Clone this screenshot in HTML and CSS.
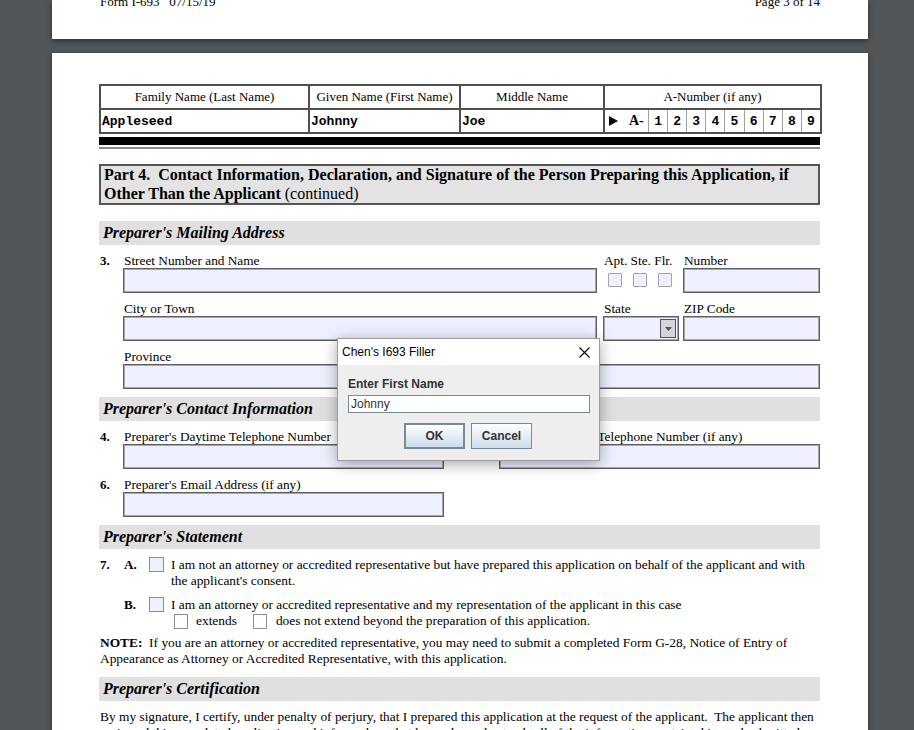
FILE: index.html
```html
<!DOCTYPE html>
<html>
<head>
<meta charset="utf-8">
<title>I-693 Filler</title>
<link rel="stylesheet" href="styles.css">
</head>
<body>
<div class="page page-prev">
  <div class="running-foot"><span>Form I-693&nbsp;&nbsp;&nbsp;07/15/19</span><span>Page 3 of 14</span></div>
</div>

<div class="page page-cur">
  <table class="names">
    <colgroup><col class="c1"><col class="c2"><col class="c3"><col class="c4"></colgroup>
    <tr class="hdr">
      <td>Family Name (Last Name)</td>
      <td>Given Name (First Name)</td>
      <td>Middle Name</td>
      <td>A-Number (if any)</td>
    </tr>
    <tr class="vals">
      <td>Appleseed</td>
      <td>Johnny</td>
      <td>Joe</td>
      <td class="anum">
        <div class="anum-row">
          <span class="anum-pre"><svg class="tri" width="9" height="10" viewBox="0 0 9 10"><polygon points="0,0 9,5 0,10" fill="#000"/></svg><b>A-</b></span>
          <span class="digit">1</span><span class="digit">2</span><span class="digit">3</span><span class="digit">4</span><span class="digit">5</span><span class="digit">6</span><span class="digit">7</span><span class="digit">8</span><span class="digit">9</span>
        </div>
      </td>
    </tr>
  </table>
  <div class="rule-black"></div>
  <div class="rule-gray"></div>

  <div class="part-box">Part 4.&nbsp; Contact Information, Declaration, and Signature of the Person Preparing this Application, if Other Than the Applicant <span class="cont">(continued)</span></div>

  <div class="sec-bar sec-first">Preparer's Mailing Address</div>

  <div class="row row-addr">
    <div class="num">3.</div>
    <div class="field">
      <div class="lbl">Street Number and Name</div>
      <div class="inp w-street"></div>
    </div>
    <div class="field">
      <div class="lbl">Apt. Ste. Flr.</div>
      <div class="apt-boxes"><span class="apt-cb"></span><span class="apt-cb"></span><span class="apt-cb"></span></div>
    </div>
    <div class="field">
      <div class="lbl">Number</div>
      <div class="inp w-num"></div>
    </div>
  </div>

  <div class="row row-addr">
    <div class="num"></div>
    <div class="field">
      <div class="lbl">City or Town</div>
      <div class="inp w-street"></div>
    </div>
    <div class="field">
      <div class="lbl">State</div>
      <div class="inp sel"><span class="sel-btn"><svg width="7" height="4" viewBox="0 0 7 4"><polygon points="0,0 7,0 3.5,4" fill="#555"/></svg></span></div>
    </div>
    <div class="field">
      <div class="lbl">ZIP Code</div>
      <div class="inp w-num"></div>
    </div>
  </div>

  <div class="row row-prov">
    <div class="num"></div>
    <div class="field">
      <div class="lbl">Province</div>
      <div class="inp w-prov"></div>
    </div>
  </div>

  <div class="sec-bar">Preparer's Contact Information</div>

  <div class="row row-contact">
    <div class="num">4.</div>
    <div class="field">
      <div class="lbl">Preparer's Daytime Telephone Number</div>
      <div class="inp w-half"></div>
    </div>
    <div class="num">5.</div>
    <div class="field">
      <div class="lbl">Preparer's Mobile Telephone Number (if any)</div>
      <div class="inp w-half"></div>
    </div>
  </div>

  <div class="row row-contact">
    <div class="num">6.</div>
    <div class="field">
      <div class="lbl">Preparer's Email Address (if any)</div>
      <div class="inp w-half"></div>
    </div>
  </div>

  <div class="sec-bar">Preparer's Statement</div>

  <div class="stmt stmt-a">
    <div class="num">7.</div>
    <div class="num">A.</div>
    <div><span class="cb"></span></div>
    <div class="stmt-text">I am not an attorney or accredited representative but have prepared this application on behalf of the applicant and with the applicant's consent.</div>
  </div>

  <div class="stmt stmt-b">
    <div class="num"></div>
    <div class="num">B.</div>
    <div><span class="cb"></span></div>
    <div class="stmt-text">
      <div>I am an attorney or accredited representative and my representation of the applicant in this case</div>
      <div class="sub"><span class="cb cb-sub"></span><span>extends</span><span class="cb cb-sub cb-sub2"></span><span>does not extend beyond the preparation of this application.</span></div>
    </div>
  </div>

  <p class="note"><b>NOTE:</b>&nbsp; If you are an attorney or accredited representative, you may need to submit a completed Form G-28, Notice of Entry of Appearance as Attorney or Accredited Representative, with this application.</p>

  <div class="sec-bar sec-cert">Preparer's Certification</div>

  <p class="cert">By my signature, I certify, under penalty of perjury, that I prepared this application at the request of the applicant.&nbsp; The applicant then reviewed this completed application and informed me that he or she understands all of the information contained in, and submitted with, his or her application.</p>
</div>

<div class="dialog">
  <div class="dlg-title">
    <span>Chen's I693 Filler</span>
    <svg class="dlg-close" width="11" height="11" viewBox="0 0 11 11"><path d="M0.5 0.5 L10.5 10.5 M10.5 0.5 L0.5 10.5" stroke="#000" stroke-width="1.1" fill="none"/></svg>
  </div>
  <div class="dlg-body">
    <div class="dlg-label">Enter First Name</div>
    <div class="dlg-input">Johnny</div>
    <div class="dlg-buttons">
      <span class="dlg-btn dlg-ok">OK</span>
      <span class="dlg-btn">Cancel</span>
    </div>
  </div>
</div>
</body>
</html>
```

FILE: styles.css
```css
* { box-sizing: border-box; }

html, body {
  margin: 0;
  height: 730px;
  overflow: hidden;
}

body {
  background: #525659;
  font-family: "Liberation Serif", "Times New Roman", serif;
  color: #000;
  position: relative;
}

.page {
  width: 816px;
  margin-left: 52px;
  background: #fff;
  box-shadow: 0 2px 5px rgba(0, 0, 0, 0.45);
}

.page-prev {
  height: 39px;
  overflow: hidden;
}

.running-foot {
  display: flex;
  justify-content: space-between;
  padding: 0 48px 0 48px;
  margin-top: -5px;
  font-size: 13px;
  line-height: 14px;
}

.page-cur {
  margin-top: 14px;
  padding: 31px 48px 40px 47px;
}

/* name table */
.names {
  border-collapse: collapse;
  table-layout: fixed;
  width: 721px;
}
.names .c1 { width: 209px; }
.names .c2 { width: 151px; }
.names .c3 { width: 144px; }
.names .c4 { width: 217px; }
.names td {
  border: 2px solid #505050;
  padding: 0;
}
.names .hdr td {
  height: 24px;
  text-align: center;
  font-size: 13px;
  line-height: 14px;
}
.names .vals td {
  height: 24px;
  font-family: "Liberation Mono", "Courier New", monospace;
  font-weight: bold;
  font-size: 13px;
  padding-left: 1px;
}
.names .vals td.anum { padding: 0; }
.anum-row {
  display: flex;
  height: 22px;
  align-items: stretch;
}
.anum-pre {
  width: 43px;
  display: flex;
  align-items: center;
  padding-left: 4px;
  gap: 11px;
  font-family: "Liberation Serif", serif;
  font-size: 14px;
}
.anum-pre b { font-weight: bold; }
.digit {
  flex: 1;
  border-left: 1px solid #a0a0a0;
  display: flex;
  align-items: center;
  justify-content: center;
}

.rule-black {
  height: 8px;
  background: #000;
  margin-top: 3px;
}
.rule-gray {
  height: 2px;
  background: #8c8c8c;
  margin-top: 2px;
}

.part-box {
  margin-top: 15px;
  border: 2px solid #555;
  background: #e3e3e3;
  padding: 0 3px 0;
  font-size: 16px;
  line-height: 18.5px;
  font-weight: bold;
}
.part-box .cont { font-weight: normal; }

.sec-bar {
  height: 24px;
  margin-top: 8px;
  background: #e0e0e0;
  font-weight: bold;
  font-style: italic;
  font-size: 16px;
  line-height: 24px;
  padding-left: 4px;
}
.sec-first { margin-top: 16px; }
.sec-cert { margin-top: 10px; }

/* field rows */
.row {
  display: grid;
  margin-top: 9px;
}
.row-addr { grid-template-columns: 24px 480px 80px 137px; }
.row-prov { grid-template-columns: 24px 697px; }
.row-contact { grid-template-columns: 24px 352px 24px 321px; }

.num {
  font-weight: bold;
  font-size: 13px;
  line-height: 14px;
  padding-left: 1px;
}
.lbl {
  font-size: 13.3px;
  line-height: 14px;
  height: 14px;
  white-space: nowrap;
  padding-left: 1px;
}
.inp {
  height: 25px;
  background: #eef0fd;
  border: 1px solid #5e5e5e;
  box-shadow: inset 1px 1px 0 #a8a8a8, inset -1px -1px 0 #a8a8a8;
}
.w-street { width: 474px; }
.w-num { width: 137px; }
.w-prov { width: 697px; }
.w-half { width: 321px; }

.sel {
  width: 76px;
  position: relative;
}
.sel-btn {
  position: absolute;
  right: 2px;
  top: 2px;
  width: 16px;
  height: 19px;
  background: #d4d4dc;
  border: 1px solid #555;
  display: flex;
  align-items: center;
  justify-content: center;
}

.apt-boxes {
  display: flex;
  gap: 11px;
  padding: 5px 0 0 5px;
}
.apt-cb {
  width: 14px;
  height: 14px;
  border: 1px solid #a3a3a3;
  background: #eef0fc;
  border-radius: 1px;
}

/* statement */
.stmt {
  display: grid;
  grid-template-columns: 24px 26px 22px 1fr;
  margin-top: 8px;
  font-size: 13.4px;
  line-height: 16px;
}
.stmt .num { line-height: 16px; font-size: 13px; }
.cb {
  display: block;
  width: 15px;
  height: 15px;
  border: 1px solid #8d8d8d;
  background: #eef0fc;
  margin-top: 0;
}
.sub {
  display: flex;
  align-items: center;
}
.cb-sub {
  width: 14px;
  height: 15px;
  background: #fff;
  margin-left: 3px;
  margin-right: 8px;
}
.cb-sub2 { margin-left: 16px; margin-right: 9px; }

.note {
  margin: 6px 0 0 1px;
  font-size: 13.4px;
  line-height: 16px;
}
.cert {
  margin: 8px 0 0 1px;
  font-size: 13.4px;
  line-height: 16px;
}

/* dialog overlay */
.dialog {
  position: absolute;
  left: 337px;
  top: 338px;
  width: 263px;
  height: 123px;
  border: 1px solid #9c9c9c;
  background: #eeeeee;
  box-shadow: 0 3px 14px rgba(0, 0, 0, 0.35);
  font-family: "Liberation Sans", Arial, sans-serif;
  font-size: 12px;
  color: #333;
}
.dlg-title {
  height: 26px;
  background: #fff;
  display: flex;
  align-items: center;
  justify-content: space-between;
  padding: 0 9px 0 4px;
  color: #000;
}
.dlg-body {
  padding: 12px 10px 0 10px;
}
.dlg-label {
  font-weight: bold;
  line-height: 14px;
}
.dlg-input {
  margin-top: 4px;
  height: 18px;
  width: 242px;
  background: #fff;
  border: 1px solid #7a8a99;
  padding-left: 2px;
  line-height: 16px;
}
.dlg-buttons {
  display: flex;
  justify-content: center;
  gap: 6px;
  margin-top: 10px;
  padding-right: 1px;
}
.dlg-btn {
  width: 61px;
  height: 26px;
  border: 1px solid #7a8a99;
  background: linear-gradient(#ffffff, #cddcec);
  font-weight: bold;
  display: flex;
  align-items: center;
  justify-content: center;
}
.dlg-ok { border-width: 2px; }
```
